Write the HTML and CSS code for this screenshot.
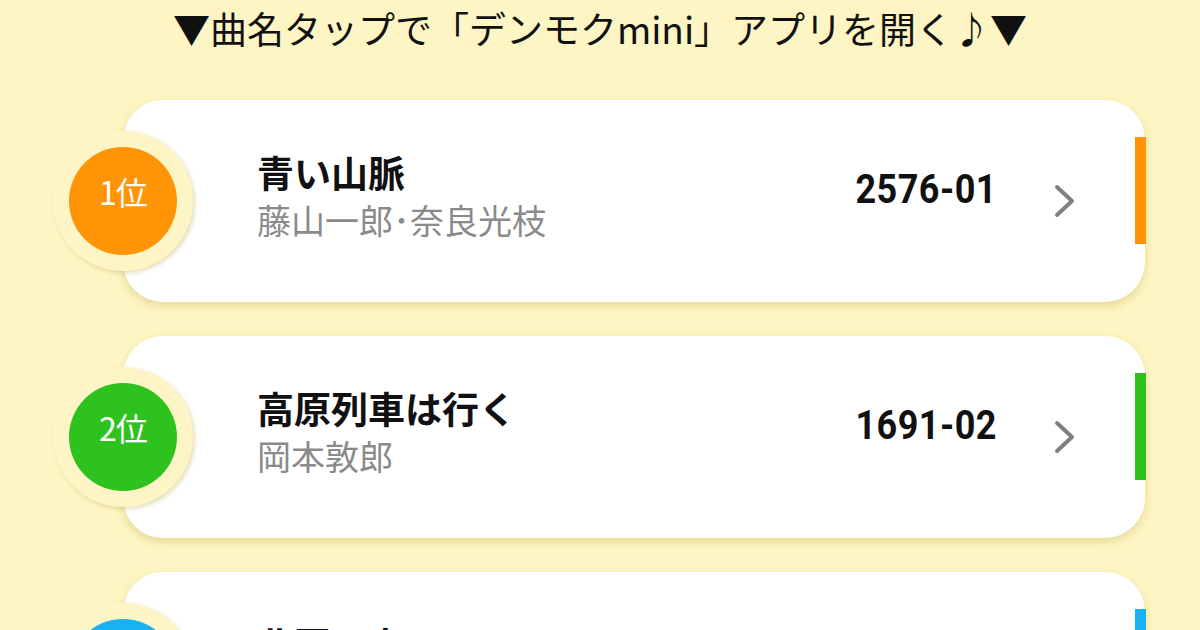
FILE: index.html
```html
<!DOCTYPE html>
<html lang="ja">
<head>
<meta charset="utf-8">
<link rel="stylesheet" href="styles.css">
</head>
<body>
<div class="page">
  <h1 class="heading">▼曲名タップで「デンモクmini」アプリを開く♪▼</h1>
  <ul class="ranking">
    <li class="card rank-1">
      <div class="ring"><div class="badge">1位</div></div>
      <div class="info">
        <div class="title">青い山脈</div>
        <div class="artist">藤山一郎･奈良光枝</div>
      </div>
      <div class="code">2576-01</div>
      <svg class="chev" width="24" height="36" viewBox="0 0 24 36"><path d="M4 4 L19 18 L4 32" fill="none" stroke="#808080" stroke-width="4" stroke-linecap="round" stroke-linejoin="round"/></svg>
      <div class="bar"></div>
    </li>
    <li class="card rank-2">
      <div class="ring"><div class="badge">2位</div></div>
      <div class="info">
        <div class="title">高原列車は行く</div>
        <div class="artist">岡本敦郎</div>
      </div>
      <div class="code">1691-02</div>
      <svg class="chev" width="24" height="36" viewBox="0 0 24 36"><path d="M4 4 L19 18 L4 32" fill="none" stroke="#808080" stroke-width="4" stroke-linecap="round" stroke-linejoin="round"/></svg>
      <div class="bar"></div>
    </li>
    <li class="card rank-3">
      <div class="ring"><div class="badge">3位</div></div>
      <div class="info">
        <div class="title">北国の春</div>
        <div class="artist">千昌夫</div>
      </div>
      <div class="code">1126-01</div>
      <svg class="chev" width="24" height="36" viewBox="0 0 24 36"><path d="M4 4 L19 18 L4 32" fill="none" stroke="#808080" stroke-width="4" stroke-linecap="round" stroke-linejoin="round"/></svg>
      <div class="bar"></div>
    </li>
  </ul>
</div>
</body>
</html>
```

FILE: styles.css
```css
html, body {
  margin: 0;
  padding: 0;
  background: #fdf5c3;
  overflow: hidden;
}
.page {
  width: 1200px;
  height: 630px;
  font-family: "Noto Sans CJK JP", "Noto Sans", sans-serif;
}
.heading {
  margin: 0;
  height: 100px;
  padding-top: 0;
  box-sizing: border-box;
  text-align: center;
  font-size: 37px;
  font-weight: 400;
  line-height: 56px;
  color: #111;
  letter-spacing: 0;
}
.ranking {
  list-style: none;
  margin: 0;
  padding: 0 55px 0 123px;
  display: flex;
  flex-direction: column;
  gap: 34px;
}
.card {
  height: 202px;
  background: #fff;
  border-radius: 40px;
  box-shadow: 0 4px 8px rgba(190, 170, 70, 0.35);
  display: flex;
  align-items: center;
}
.ring {
  width: 140px;
  height: 140px;
  margin-left: -70px;
  border-radius: 50%;
  background: #fdf5c6;
  box-shadow: 2px 2px 4px rgba(180, 160, 60, 0.35);
  display: flex;
  align-items: center;
  justify-content: center;
  flex: none;
}
.badge {
  width: 108px;
  height: 108px;
  border-radius: 50%;
  color: #fff;
  font-size: 32px;
  line-height: 88px;
  text-align: center;
  letter-spacing: -1px;
}
.rank-1 .badge, .rank-1 .bar { background: #ff9406; }
.rank-2 .badge, .rank-2 .bar { background: #2ec21e; }
.rank-3 .badge, .rank-3 .bar { background: #16b2f2; }
.info {
  margin-left: 64px;
  flex: 1;
  padding-bottom: 8px;
}
.title {
  font-size: 37px;
  font-weight: 700;
  color: #111;
  line-height: 46px;
}
.artist {
  font-size: 34px;
  color: #8a8a8a;
  line-height: 50px;
}
.code {
  font-family: Roboto, "Liberation Sans", sans-serif;
  font-weight: 700;
  font-size: 36px;
  line-height: 44px;
  letter-spacing: 0.5px;
  color: #111;
  margin-bottom: 22px;
  transform: scaleY(1.12);
}
.chev {
  margin-left: 56px;
  flex: none;
}
.bar {
  align-self: flex-start;
  margin-top: 37px;
  margin-left: 58px;
  margin-right: -1px;
  width: 11px;
  height: 107px;
  flex: none;
}
```
